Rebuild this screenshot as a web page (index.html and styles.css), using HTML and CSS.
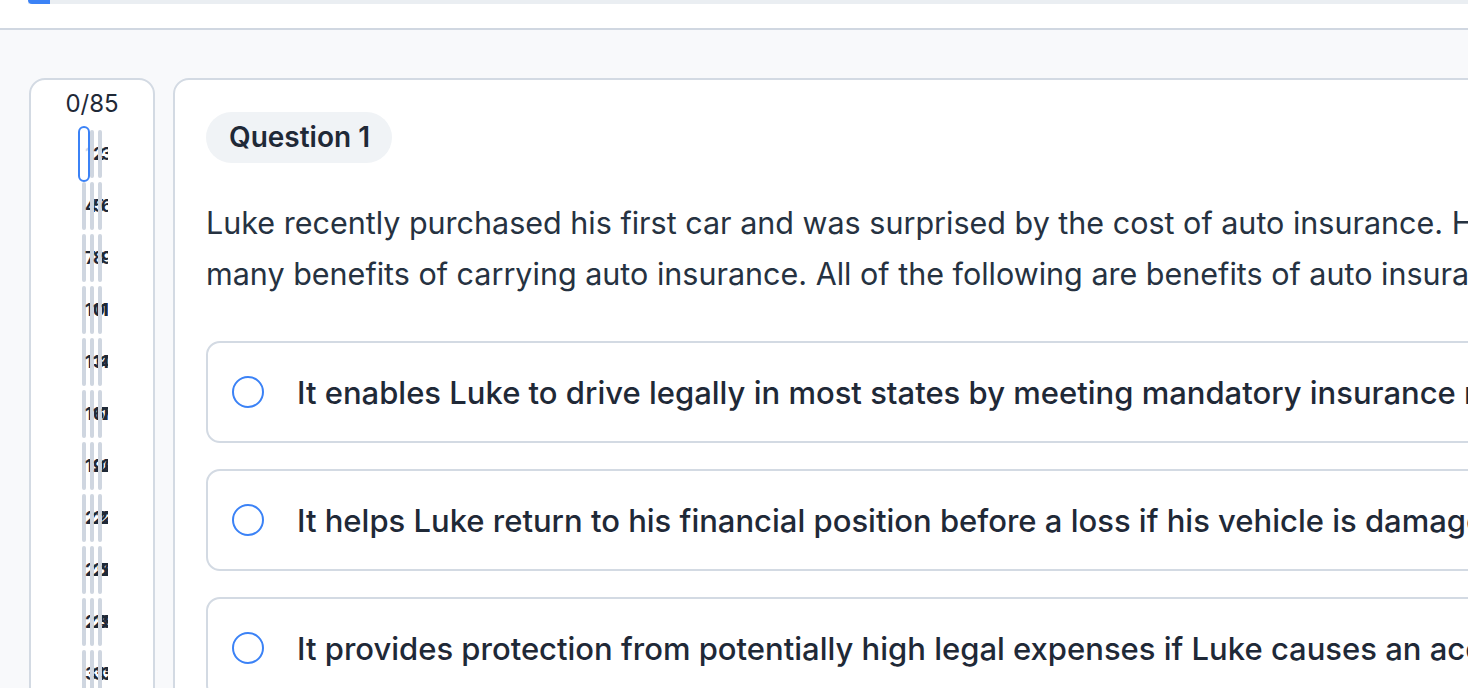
FILE: index.html
```html
<!DOCTYPE html>
<html lang="en">
<head>
<meta charset="utf-8">
<title>Quiz</title>
<link rel="stylesheet" href="styles.css">
</head>
<body>
<header class="topbar">
  <div class="progress"><div class="progress-fill"></div></div>
</header>
<main class="layout">
  <aside class="sidebar">
    <div class="counter">0/85</div>
    <div class="qlist">
      <div class="qgrid">
        <div class="qbtn current">1</div><div class="qbtn">2</div><div class="qbtn">3</div>
        <div class="qbtn">4</div><div class="qbtn">5</div><div class="qbtn">6</div>
        <div class="qbtn">7</div><div class="qbtn">8</div><div class="qbtn">9</div>
        <div class="qbtn">10</div><div class="qbtn">11</div><div class="qbtn">12</div>
        <div class="qbtn">13</div><div class="qbtn">14</div><div class="qbtn">15</div>
        <div class="qbtn">16</div><div class="qbtn">17</div><div class="qbtn">18</div>
        <div class="qbtn">19</div><div class="qbtn">20</div><div class="qbtn">21</div>
        <div class="qbtn">22</div><div class="qbtn">23</div><div class="qbtn">24</div>
        <div class="qbtn">25</div><div class="qbtn">26</div><div class="qbtn">27</div>
        <div class="qbtn">28</div><div class="qbtn">29</div><div class="qbtn">30</div>
        <div class="qbtn">31</div><div class="qbtn">32</div><div class="qbtn">33</div>
        <div class="qbtn">34</div><div class="qbtn">35</div><div class="qbtn">36</div>
      </div>
    </div>
  </aside>
  <section class="card">
    <div class="badge">Question 1</div>
    <p class="question">Luke recently purchased his first car and was surprised by the cost of auto insurance. His agent explained the many benefits of carrying auto insurance. All of the following are benefits of auto insurance EXCEPT:</p>
    <div class="options">
      <label class="option"><span class="radio"></span><span class="opt-text">It enables Luke to drive legally in most states by meeting mandatory insurance requirements.</span></label>
      <label class="option"><span class="radio"></span><span class="opt-text">It helps Luke return to his financial position before a loss if his vehicle is damaged.</span></label>
      <label class="option"><span class="radio"></span><span class="opt-text">It provides protection from potentially high legal expenses if Luke causes an accident.</span></label>
    </div>
  </section>
</main>
</body>
</html>
```
FILE: styles.css
```css
* { box-sizing: border-box; }
html, body { margin: 0; padding: 0; }
body {
  width: 1468px;
  height: 688px;
  overflow: hidden;
  background: #f8f9fb;
  font-family: Inter, "Noto Sans", "Liberation Sans", sans-serif;
  color: #1f2937;
}
.topbar {
  height: 30px;
  background: #ffffff;
  border-bottom: 2px solid #d0d7e1;
}
.progress {
  margin-left: 28px;
  height: 4px;
  background: #eaeef2;
  overflow: hidden;
}
.progress-fill {
  width: 22px;
  height: 4px;
  background: #3b82f6;
  border-radius: 0 0 0 4px;
}
.layout {
  display: flex;
  align-items: flex-start;
  gap: 18px;
  padding: 48px 0 0 29px;
}
.sidebar {
  flex: 0 0 126px;
  display: flex;
  flex-direction: column;
  align-items: center;
  background: #ffffff;
  border: 2px solid #d3dae3;
  border-radius: 16px;
  padding-top: 9px;
  height: 1000px;
}
.counter {
  font-size: 24px;
  line-height: 30px;
  color: #1f2937;
  margin: 0 0 7px 0;
}
.qlist {
  width: 32px;
  overflow: hidden;
  padding: 4px 0 0 6px;
}
.qgrid {
  display: grid;
  grid-template-columns: repeat(3, 4px);
  grid-auto-rows: 48px;
  gap: 4px;
}
.qbtn {
  background: #cfd6e0;
  border-radius: 2px;
  font-size: 18px;
  font-weight: 700;
  line-height: 48px;
  text-indent: 3px;
  color: #1f2937;
  white-space: nowrap;
}
.qbtn.current {
  background: #ffffff;
  color: #c9d6ea;
  outline: 2px solid #3b82f6;
  outline-offset: 2px;
  border-radius: 4px;
}
.card {
  flex: 0 0 1726px;
  background: #ffffff;
  border: 2px solid #d3dae3;
  border-radius: 16px;
  padding: 32px 31px;
  height: 1000px;
}
.badge {
  display: inline-block;
  height: 51px;
  line-height: 51px;
  padding: 0 22px 0 23px;
  background: #f0f3f6;
  border-radius: 999px;
  font-size: 28px;
  font-weight: 600;
  color: #1f2937;
}
.question {
  margin: 34px 0 42px;
  font-size: 30.5px;
  line-height: 51px;
  color: #263241;
}
.options {
  display: flex;
  flex-direction: column;
  gap: 26px;
}
.option {
  display: flex;
  align-items: center;
  height: 102px;
  border: 2px solid #d3dae3;
  border-radius: 14px;
  padding-left: 24px;
  white-space: nowrap;
}
.radio {
  flex: 0 0 32px;
  height: 32px;
  border: 2.5px solid #3b82f6;
  border-radius: 50%;
  margin-right: 33px;
}
.opt-text {
  font-size: 31px;
  font-weight: 500;
  color: #1f2937;
}
```
